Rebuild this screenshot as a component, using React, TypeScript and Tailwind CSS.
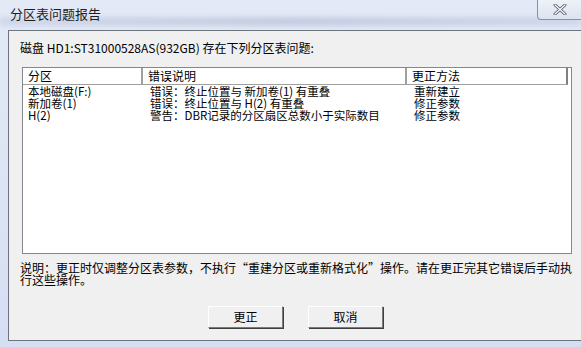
import React from 'react';

const FONT = '"Noto Sans CJK SC", "Liberation Sans", sans-serif';

const rows = [
  { part: '本地磁盘(F:)', err: '错误：终止位置与 新加卷(1) 有重叠', fix: '重新建立' },
  { part: '新加卷(1)', err: '错误：终止位置与 H(2) 有重叠', fix: '修正参数' },
  { part: 'H(2)', err: '警告：DBR记录的分区扇区总数小于实际数目', fix: '修正参数' },
];

function Btn({ label }: { label: string }) {
  return (
    <button className="w-[75px] h-[22px] bg-[#f0f0f0] border border-t-white border-l-white border-r-[#7a7a7a] border-b-[#7a7a7a] shadow-[1px_1px_0_#404040] text-[12px] leading-[12px] text-black">
      {label}
    </button>
  );
}

export default function App() {
  return (
    <div
      className="w-[581px] h-[347px] overflow-hidden bg-gradient-to-b from-[#e3e9f5] to-[#d6def4] flex flex-col"
      style={{ fontFamily: FONT }}
    >
      {/* title bar */}
      <div className="h-[30px] flex items-start justify-between relative">
        <div className="absolute inset-x-0 top-[17px] h-[9px] bg-gradient-to-r from-[#c9d2e6] via-[#b9c2d8] to-[#c7d0e6] opacity-70 blur-[2px]" />
        <span className="relative pl-[10px] pt-[6px] text-[13px] leading-[16px] text-[#1e1e1e]">分区表问题报告</span>
        <div className="relative w-[44px] h-[20px] border border-t-0 border-r-0 border-[#8c9099] rounded-bl-[4px] bg-gradient-to-b from-[#eef1f8] to-[#dde3ef] flex items-center justify-center">
          <svg width="14" height="11" viewBox="0 0 14 11">
            <path d="M2 1 L12 10 M12 1 L2 10" stroke="#555b66" strokeWidth="3" strokeLinecap="round" />
            <path d="M2 1 L12 10 M12 1 L2 10" stroke="#ffffff" strokeWidth="1.2" strokeLinecap="round" />
          </svg>
        </div>
      </div>

      {/* client area */}
      <div className="ml-[8px] h-[311px] bg-[#f0f0f0] border-t border-l border-b border-[#6d7480] text-black text-[12px] leading-[12px] flex flex-col">
        <div className="pl-[11px] pt-[11px] h-[36px]">磁盘 HD1:ST31000528AS(932GB) 存在下列分区表问题:</div>

        <div className="ml-[13px] w-[550px] h-[187px] bg-white border border-[#828790] flex flex-col">
          <div className="flex h-[17px] text-black">
            <div className="w-[120px] pl-[5px] pt-[2px] border-r-2 border-[#a0a0a0] border-b border-b-[#a0a0a0]">分区</div>
            <div className="w-[264px] pl-[5px] pt-[2px] border-r-2 border-[#a0a0a0] border-b border-b-[#a0a0a0]">错误说明</div>
            <div className="w-[161px] pl-[5px] pt-[2px] border-r-2 border-[#808080] border-b border-b-[#a0a0a0]">更正方法</div>
          </div>
          {rows.map((r) => (
            <div key={r.part} className="flex h-[12px] whitespace-nowrap text-[11.5px] leading-[12px]">
              <div className="w-[120px] pl-[5px]">{r.part}</div>
              <div className="w-[264px] pl-[7px]">{r.err}</div>
              <div className="w-[161px] pl-[7px]">{r.fix}</div>
            </div>
          ))}
        </div>

        <div className="pl-[11px] pt-[8px] pr-[2px] leading-[12px] h-[52px]">
          说明：更正时仅调整分区表参数，不执行“重建分区或重新格式化”操作。请在更正完其它错误后手动执行这些操作。
        </div>

        <div className="flex gap-[25px] pl-[199px]">
          <Btn label="更正" />
          <Btn label="取消" />
        </div>
      </div>
    </div>
  );
}
